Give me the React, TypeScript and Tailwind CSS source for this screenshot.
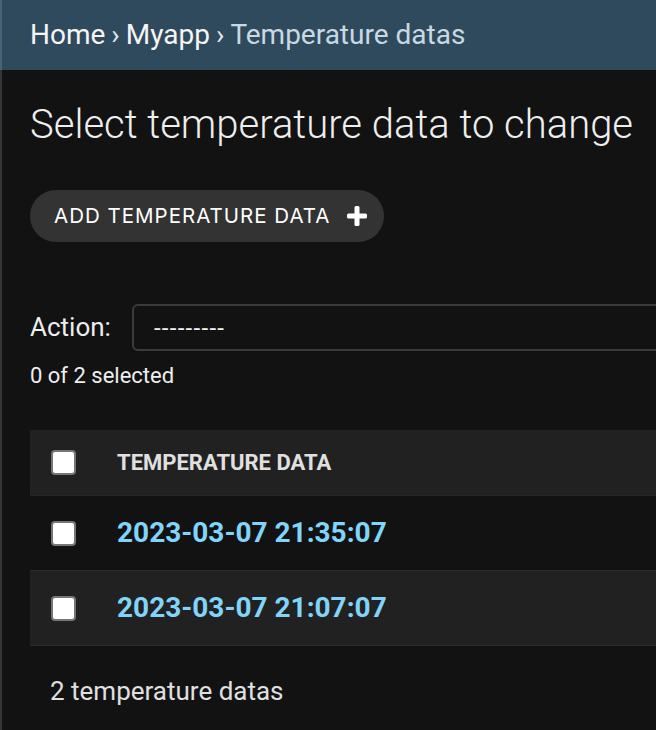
const rows = ['2023-03-07 21:35:07', '2023-03-07 21:07:07']

function Checkbox() {
    return <span className="block w-[25px] h-[25px] rounded-[4px] bg-white border-2 border-[#767676]" />
}

function PlusIcon() {
    return (
        <svg width="20" height="20" viewBox="0 0 20 20">
            <rect x="7.5" y="0" width="5" height="20" rx="1.5" fill="#fff" />
            <rect x="0" y="7.5" width="20" height="5" rx="1.5" fill="#fff" />
        </svg>
    )
}

export default function App() {
    return (
        <div className="w-[656px] h-[730px] overflow-hidden bg-[#121212] text-[#eeeeee] font-['Roboto',sans-serif]">
            <div className="h-[70px] bg-[#2f4a5c] border-l-2 border-[#4a6273] pl-[28px] flex items-center text-[28px] text-[#c8d9e4] whitespace-nowrap">
                <span className="text-[#f5f5f5]">Home</span>
                <span className="mx-[6px] text-[#e0e8ee]">›</span>
                <span className="text-[#f5f5f5]">Myapp</span>
                <span className="mx-[6px] text-[#e0e8ee]">›</span>
                <span>Temperature datas</span>
            </div>
            <div className="border-l-2 border-[#353535] h-[660px] pl-[28px]">
                <h1 className="pt-[31px] text-[40px] font-light leading-[48px] text-[#eeeeee] whitespace-nowrap">
                    Select temperature data to change
                </h1>
                <div className="mt-[41px] inline-flex items-center h-[52px] rounded-full bg-[#333333] pl-[24px] pr-[17px] gap-[17px] font-['Inter',sans-serif] text-[20.5px] tracking-[1px] text-white whitespace-nowrap">
                    ADD TEMPERATURE DATA
                    <PlusIcon />
                </div>
                <div className="mt-[62px] flex items-center gap-[21px] whitespace-nowrap">
                    <span className="text-[26px]">Action:</span>
                    <div className="flex-1 h-[47px] border-2 border-r-0 border-[#3a3a3a] rounded-l-[6px] flex items-center pl-[20px] text-[24px] tracking-[1.3px]">
                        ---------
                    </div>
                </div>
                <div className="mt-[11px] text-[22px] leading-[28px]">0 of 2 selected</div>
                <div className="mt-[40px]">
                    <div className="h-[66px] bg-[#212121] flex items-center border-b border-[#272727]">
                        <div className="w-[87px] pl-[21px]"><Checkbox /></div>
                        <span className="text-[22px] font-bold text-[#e0e0e0]">TEMPERATURE DATA</span>
                    </div>
                    {rows.map((r, i) => (
                        <div key={r} className={`h-[75px] flex items-center border-b border-[#2a2a2a] ${i % 2 ? 'bg-[#212121]' : 'bg-[#121212]'}`}>
                            <div className="w-[87px] pl-[21px]"><Checkbox /></div>
                            <span className="text-[28px] font-bold text-[#81d4fa] whitespace-nowrap">{r}</span>
                        </div>
                    ))}
                </div>
                <div className="pt-[26px] pl-[20px] text-[26px] text-[#e0e0e0]">2 temperature datas</div>
            </div>
        </div>
    )
}
